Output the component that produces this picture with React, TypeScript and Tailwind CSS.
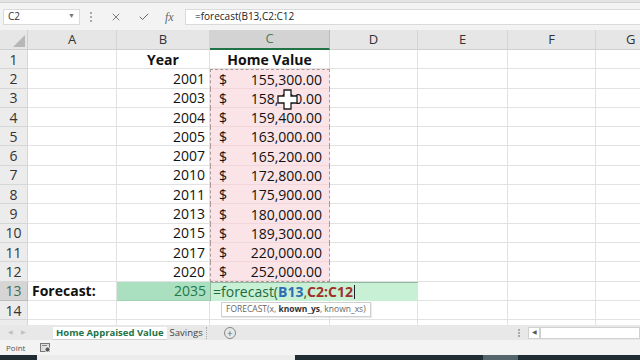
import { X, Check } from 'lucide-react';

const years = [2001, 2003, 2004, 2005, 2007, 2010, 2011, 2013, 2015, 2017, 2020];
const values = [
  '155,300.00',
  '158,400.00',
  '159,400.00',
  '163,000.00',
  '165,200.00',
  '172,800.00',
  '175,900.00',
  '180,000.00',
  '189,300.00',
  '220,000.00',
  '252,000.00',
];

const cols = [
  { key: 'A', w: 'w-[89px]' },
  { key: 'B', w: 'w-[93px]' },
  { key: 'C', w: 'w-[120px]' },
  { key: 'D', w: 'w-[88px]' },
  { key: 'E', w: 'w-[90px]' },
  { key: 'F', w: 'w-[88px]' },
];

const cell = 'h-full shrink-0 border-r border-b border-[#e2e2e2] flex items-center';

function RowHead({ n, selected }: { n: number; selected?: boolean }) {
  return (
    <div
      className={`w-[28px] h-full shrink-0 flex items-center justify-center border-r border-b text-[14px] ${
        selected
          ? 'bg-[#d5d5d5] text-[#3f6f52] border-[#bdbdbd]'
          : 'bg-[#ececec] text-[#333] border-[#d6d6d6]'
      }`}
    >
      {n}
    </div>
  );
}

function Cursor() {
  return (
    <svg
      className="absolute left-[277px] top-[39px] pointer-events-none"
      width="21"
      height="21"
      viewBox="0 0 21 21"
    >
      <path
        d="M7 1h7v6h6v7h-6v6H7v-6H1V7h6z"
        fill="#fff"
        stroke="#1a1a1a"
        strokeWidth="1.3"
      />
    </svg>
  );
}

export default function App() {
  return (
    <div className="w-[640px] h-[360px] overflow-hidden bg-white font-['Open_Sans',sans-serif] text-[#111] flex flex-col">
      {/* title strip */}
      <div className="h-[3px] shrink-0 bg-[#e4e4e4] border-b border-[#d2d2d2]" />

      {/* formula bar */}
      <div className="h-[27px] shrink-0 bg-[#f3f3f3] flex items-center">
        <div className="ml-[3px] w-[77px] h-[16px] bg-white border border-[#dadada] flex items-center justify-between px-[4px] text-[10px] text-[#333]">
          <span>C2</span>
          <span className="text-[7px] text-[#777]">▼</span>
        </div>
        <div className="w-[22px] flex flex-col items-center gap-[2px]">
          <span className="w-[2px] h-[2px] bg-[#aaa]" />
          <span className="w-[2px] h-[2px] bg-[#aaa]" />
          <span className="w-[2px] h-[2px] bg-[#aaa]" />
        </div>
        <div className="w-[83px] h-[16px] flex items-center text-[#555]">
          <X className="ml-[8px] w-[12px] h-[12px]" strokeWidth={1.5} />
          <Check className="ml-[16px] w-[12px] h-[12px]" strokeWidth={1.8} />
          <span className="ml-[15px] font-['Liberation_Serif',serif] italic text-[12px] text-[#666]">fx</span>
        </div>
        <div className="flex-1 h-[16px] bg-white border-y border-l border-[#dadada] flex items-center pl-[9px] text-[10px] text-[#222]">
          =forecast(B13,C2:C12
        </div>
      </div>

      {/* column headers */}
      <div className="h-[20px] shrink-0 flex">
        <div className="w-[28px] h-full shrink-0 bg-[#e6e6e6] border-r border-b border-[#cfcfcf] relative">
          <svg className="absolute right-[2px] bottom-[2px]" width="12" height="12" viewBox="0 0 12 12">
            <path d="M12 0L12 12L0 12Z" fill="#b7b7b7" />
          </svg>
        </div>
        {cols.map((c) => (
          <div
            key={c.key}
            className={`${c.w} h-full shrink-0 flex items-center justify-center text-[13px] border-r ${
              c.key === 'C'
                ? 'bg-[#d3d3d3] text-[#4a7a5c] border-[#bdbdbd] border-b-2 border-b-[#217346]'
                : 'bg-[#e6e6e6] text-[#333] border-[#d4d4d4] border-b border-b-[#cfcfcf]'
            }`}
          >
            {c.key}
          </div>
        ))}
        <div className="flex-1 h-full bg-[#e6e6e6] border-b border-[#cfcfcf] flex items-center pl-[30px] text-[13px] text-[#333]">
          G
        </div>
      </div>

      {/* sheet */}
      <div className="relative flex flex-col text-[14px]">
        {/* row 1 */}
        <div className="h-[19.3px] flex">
          <RowHead n={1} />
          <div className={`${cell} w-[89px]`} />
          <div className={`${cell} w-[93px] justify-center font-bold`}>Year</div>
          <div className={`${cell} w-[120px] justify-center font-bold`}>Home Value</div>
          <div className={`${cell} w-[88px]`} />
          <div className={`${cell} w-[90px]`} />
          <div className={`${cell} w-[88px]`} />
          <div className={`${cell} flex-1 border-r-0`} />
        </div>

        {years.map((y, i) => {
          const first = i === 0;
          const last = i === years.length - 1;
          return (
            <div key={y} className="h-[19.3px] flex">
              <RowHead n={i + 2} />
              <div className={`${cell} w-[89px]`} />
              <div className={`${cell} w-[93px] justify-end pr-[4px]`}>{y}</div>
              <div
                className={`h-full w-[120px] shrink-0 flex items-center justify-between pl-[8px] pr-[7px] bg-[#fbe4e8] border-x border-dashed border-[#ab9999] shadow-[inset_0_-1px_0_#f2d6da] ${
                  first ? 'border-t' : ''
                } ${last ? 'border-b' : ''}`}
              >
                <span>$</span>
                <span>{values[i]}</span>
              </div>
              <div className={`${cell} w-[88px]`} />
              <div className={`${cell} w-[90px]`} />
              <div className={`${cell} w-[88px]`} />
              <div className={`${cell} flex-1 border-r-0`} />
            </div>
          );
        })}

        {/* row 13 */}
        <div className="h-[19.3px] flex">
          <RowHead n={13} selected />
          <div className={`${cell} w-[89px] pl-[4px] font-bold`}>Forecast:</div>
          <div className="h-full w-[93px] shrink-0 flex items-center justify-end pr-[4px] bg-[#aadfc0] text-[#23784a] border-b border-[#9fd3b4]">
            2035
          </div>
          <div className="relative h-full w-[208px] shrink-0 flex items-center pl-[2px] bg-[#c8f0d4] border-l border-t border-[#8fb89e] whitespace-nowrap z-10">
            <span className="text-[#1f6b3d]">=forecast(</span>
            <span className="text-[#2e6db3] font-bold">B13</span>
            <span className="text-[#1f6b3d]">,</span>
            <span className="text-[#a0322c] font-bold">C2:C12</span>
            <span className="ml-[1px] w-[1px] h-[14px] bg-[#222]" />
            <div className="absolute left-[10px] top-[19px] h-[15px] px-[4px] bg-white border border-[#cfcfcf] shadow-[1px_1px_1px_rgba(0,0,0,0.08)] flex items-center text-[8.5px] text-[#666]">
              FORECAST(x,&nbsp;<span className="font-bold text-[#333]">known_ys</span>, known_xs)
            </div>
          </div>
          <div className={`${cell} w-[90px]`} />
          <div className={`${cell} w-[88px]`} />
          <div className={`${cell} flex-1 border-r-0`} />
        </div>

        {/* row 14 */}
        <div className="h-[19.3px] flex">
          <RowHead n={14} />
          {cols.map((c) => (
            <div key={c.key} className={`${cell} ${c.w}`} />
          ))}
          <div className={`${cell} flex-1 border-r-0`} />
        </div>

        {/* partial row 15 */}
        <div className="h-[5px] flex">
          <div className="w-[28px] h-full shrink-0 bg-[#ececec] border-r border-[#d6d6d6]" />
          {cols.map((c) => (
            <div key={c.key} className={`${c.w} h-full shrink-0 border-r border-[#e2e2e2]`} />
          ))}
        </div>

        <Cursor />
      </div>

      {/* sheet tabs */}
      <div className="h-[15px] shrink-0 bg-[#e8e8e8] flex items-center text-[9.5px]">
        <span className="ml-[8px] text-[6px] text-[#c0c0c0]">◀</span>
        <span className="ml-[8px] text-[6px] text-[#c0c0c0]">▶</span>
        <div className="ml-[27px] h-[12px] px-[3px] bg-white flex items-center font-bold text-[#217346] shadow-[0_1px_0_#cfcfcf]">
          Home Appraised Value
        </div>
        <div className="h-[12px] px-[3px] flex items-center text-[#444] border-r border-dotted border-[#aaa]">
          Savings
        </div>
        <div className="ml-[17px] w-[12px] h-[12px] rounded-full border border-[#888] flex items-center justify-center text-[10px] leading-none text-[#666]">
          +
        </div>
        <div className="ml-auto mr-[8px] flex flex-col gap-[1px]">
          <span className="w-[2px] h-[2px] bg-[#aaa]" />
          <span className="w-[2px] h-[2px] bg-[#aaa]" />
          <span className="w-[2px] h-[2px] bg-[#aaa]" />
        </div>
        <div className="w-[12px] h-[12px] bg-white border border-[#d0d0d0] flex items-center justify-center text-[6px] text-[#555]">
          ◀
        </div>
        <div className="w-[100px] h-[12px] bg-white border border-[#d0d0d0]" />
      </div>

      {/* status bar */}
      <div className="h-[15px] shrink-0 bg-[#f3f3f3] flex items-center text-[8px] text-[#555]">
        <span className="ml-[6px]">Point</span>
        <svg className="ml-[15px]" width="11" height="10" viewBox="0 0 11 10">
          <rect x="0.5" y="0.5" width="9" height="8" fill="#ddd" stroke="#777" />
          <rect x="2" y="2" width="5" height="1" fill="#888" />
          <circle cx="7.5" cy="6.5" r="2.5" fill="#555" stroke="#fff" strokeWidth="0.8" />
        </svg>
      </div>

      {/* taskbar edge */}
      <div className="flex-1 flex">
        <div className="w-[37px] bg-[#1f2d33]" />
        <div className="w-[258px] bg-[#ebebeb]" />
        <div className="w-[188px] bg-[#1f2d33]" />
        <div className="w-[35px] bg-[#53646a]" />
        <div className="flex-1 bg-[#1f2d33]" />
      </div>
    </div>
  );
}
